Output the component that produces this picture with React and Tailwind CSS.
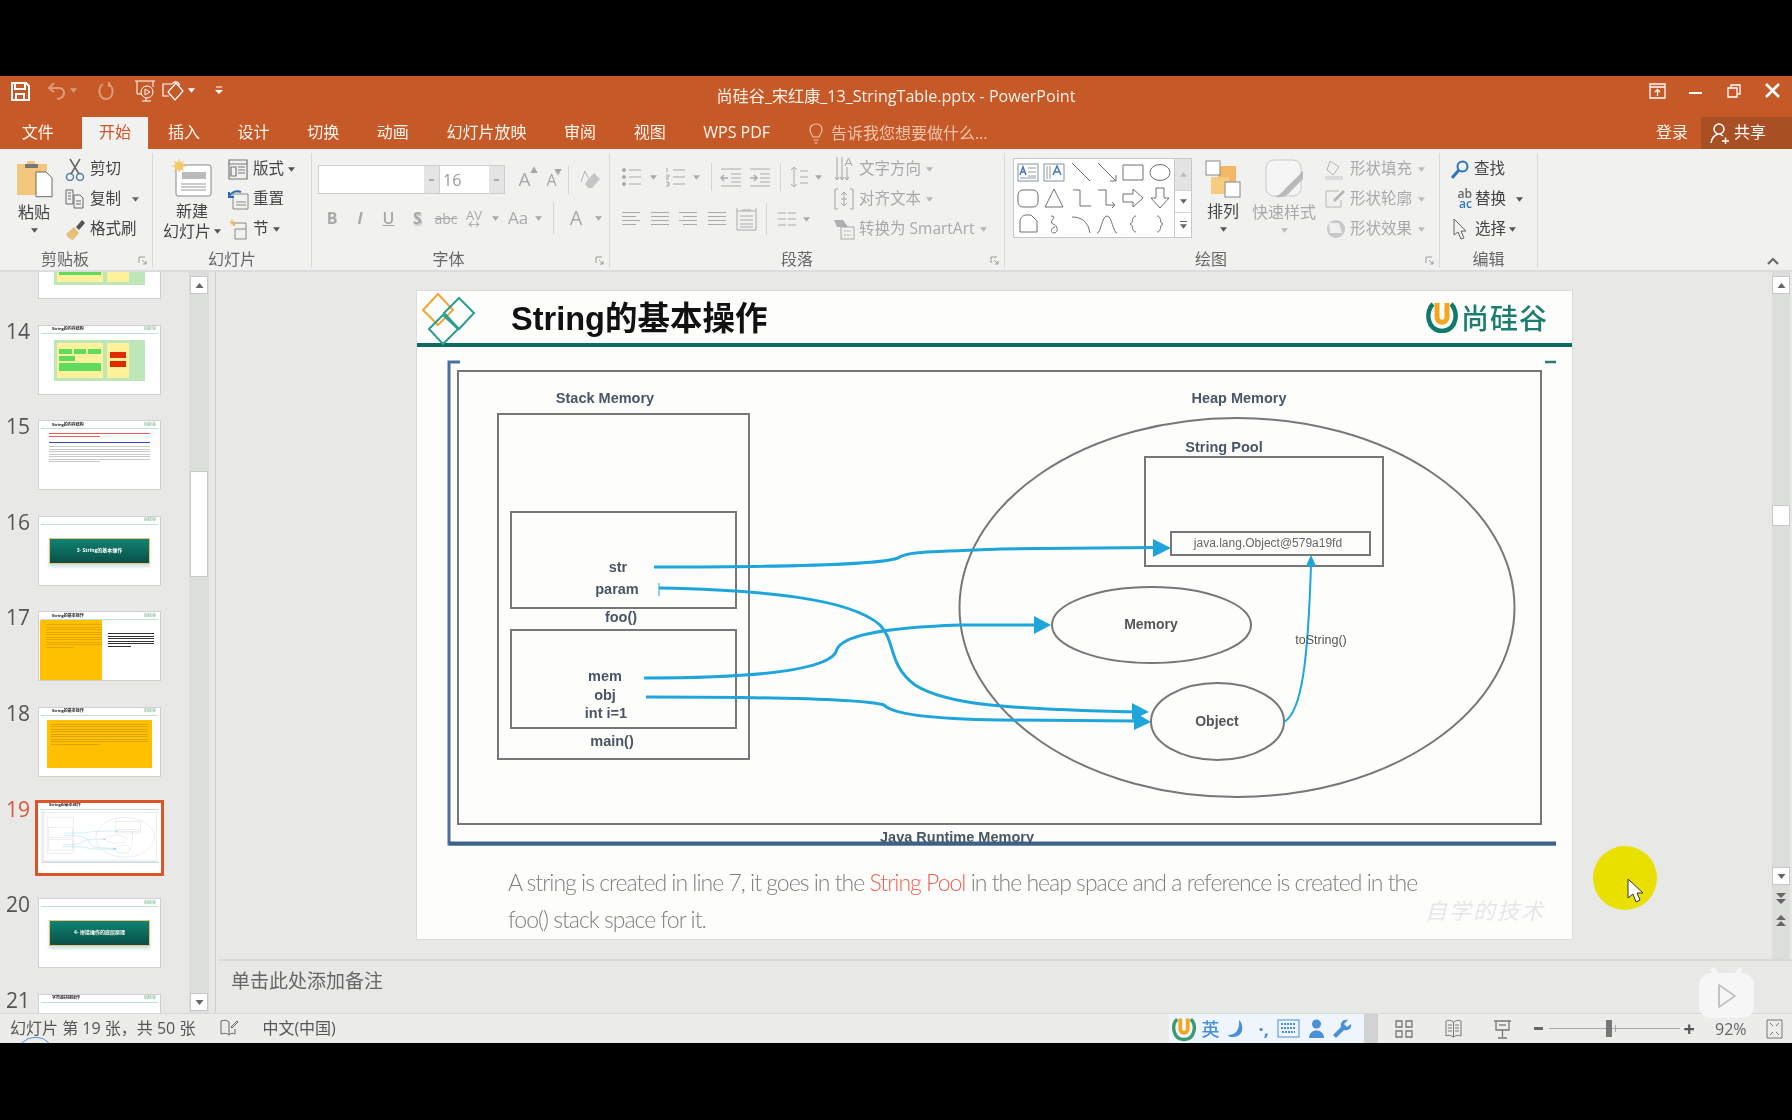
import React from "react";

const C = ({ className = "" }) => (
  <svg viewBox="0 0 8 5" className={`w-[7px] h-[5px] shrink-0 ${className}`}><path d="M0 0H8L4 5Z" fill="currentColor" /></svg>
);
const Ic = ({ w, h, vb, className = "", children, sw = 1 }) => (
  <svg width={w} height={h} viewBox={vb || `0 0 ${w} ${h}`} fill="none" stroke="currentColor" strokeWidth={sw} className={`shrink-0 ${className}`}>{children}</svg>
);

/* ---------- title bar ---------- */
function TitleBar() {
  return (
    <div className="h-[41px] grid grid-cols-[1fr_auto_1fr] text-white">
      <div className="flex items-center h-[29px] pl-[10px]">
        <Ic w={20} h={20} sw={2}><path d="M2 2H16L19 5V19H2Z" /><path d="M5 2V8H15V2M6 19V13H14V19" /></Ic>
        <Ic w={19} h={18} className="ml-[18px] text-[#df9a78]" sw={2}><path d="M6 1L1 6L6 10M2 6H11C18 6 18 16 9 17" /></Ic>
        <C className="ml-[3px] text-[#df9a78] w-[6px]" />
        <Ic w={18} h={20} className="ml-[20px] text-[#df9a78]" sw={2}><path d="M6 3C0 7 2 18 9 18C16 18 18 8 12 3M12 1V6" /></Ic>
        <Ic w={22} h={24} className="ml-[19px]"><path d="M1 2H21M3 2V15H8M19 2V8" /><circle cx="13" cy="13" r="6" /><path d="M11 10L16 13L11 16Z" /><path d="M8 22H17M12 19V22" /></Ic>
        <Ic w={23} h={22} className="ml-[6px]" sw={1.2}><path d="M10 4H1V16H7" /><path d="M14 3L21 11L13 20L6 12Z" /><path d="M10 4C13 0 18 2 17 6" /></Ic>
        <C className="ml-[3px] text-white" />
        <Ic w={8} h={9} className="ml-[20px]"><path d="M1 1H7" /><path d="M0 4H8L4 8Z" fill="currentColor" stroke="none" /></Ic>
      </div>
      <div className="text-[16.100px] leading-[41px] text-[#fbf1ea]">尚硅谷_宋红康_13_StringTable.pptx - PowerPoint</div>
      <div className="flex items-center justify-end h-[29px] pr-[12px]">
        <Ic w={17} h={16} sw={1.3}><path d="M1 1H16V15H1ZM1 4H16" /><path d="M8.500 13V7M6 9L8.500 6.500L11 9" /></Ic>
        <div className="w-[13px] h-[2.500px] bg-white ml-[23px] mt-[5px]" />
        <Ic w={14} h={14} className="ml-[25px]" sw={1.3}><path d="M1 4H10V13H1ZM4 4V1H13V10H10" /></Ic>
        <Ic w={15} h={15} className="ml-[24px]" sw={2.600}><path d="M1 1L14 14M14 1L1 14" /></Ic>
      </div>
    </div>
  );
}

function Tabs() {
  const t = "px-[18.800px] leading-[31px] text-[#fff5ee] whitespace-nowrap";
  return (
    <div className="h-[32px] flex text-[16px] items-stretch">
      <div className="w-[3px]" />
      <div className={t}>文件</div>
      <div className="w-[9.400px]" />
      <div className="px-[17px] leading-[31px] bg-[#f1f1f0] text-[#c9562a]">开始</div>
      <div className="w-[1.200px]" />
      <div className={t}>插入</div>
      <div className={t}>设计</div>
      <div className={t}>切换</div>
      <div className={t}>动画</div>
      <div className={t}>幻灯片放映</div>
      <div className={t}>审阅</div>
      <div className={t}>视图</div>
      <div className={t}>WPS PDF</div>
      <div className="flex items-center text-[#f0c4ac] ml-[20px]">
        <Ic w={14} h={21} sw={1.200}><path d="M4 14C3 11 1 10 1 7C1 3 3.500 1 7 1C10.500 1 13 3 13 7C13 10 11 11 10 14ZM4.500 17H9.500M5.500 20H8.500" /></Ic>
        <span className="ml-[8px] whitespace-nowrap">告诉我您想要做什么...</span>
      </div>
      <div className="ml-auto flex">
        <div className="leading-[31px] mr-[13px] text-[#fff5ee]">登录</div>
        <div className="w-[91px] bg-[#a94f24] flex items-center pl-[9px] text-white">
          <Ic w={19} h={22} sw={1.500}><circle cx="9" cy="7" r="5" /><path d="M1 21C2 15 5 13 8 12M10 12L13 14M12 19H19M15.500 15.500V22" /></Ic>
          <span className="ml-[5px] -mt-[2px]">共享</span>
        </div>
      </div>
    </div>
  );
}

/* ---------- ribbon ---------- */
const Launcher = () => (
  <Ic w={9} h={9} className="absolute right-[5px] bottom-[3px] text-[#9a9a9a]"><path d="M1 7V1H7M4 4L8 8M8 5V8H5" /></Ic>
);
const Group = ({ className, label, launcher, children }) => (
  <div className={`relative shrink-0 h-[115px] border-r border-[#d9d9d9] flex flex-col ${className}`}>
    <div className="h-[97px] pt-[1px] flex">{children}</div>
    <div className="text-center text-[16px] leading-[18px] text-[#666]">{label}</div>
    {launcher && <Launcher />}
  </div>
);
const Row = ({ icon, text, caret, className = "", tc = "text-[#444]" }) => (
  <div className={`h-[30px] flex items-center ${className}`}>
    {icon}
    <span className={`text-[15.500px] whitespace-nowrap ${tc}`}>{text}</span>
    {caret}
  </div>
);

function Clipboard() {
  return (
    <Group className="w-[153px]" label={<span className="pr-[22px]">剪贴板</span>} launcher>
      <div className="w-[38px] ml-[15px] flex flex-col items-center shrink-0">
        <svg width="37" height="40" viewBox="0 0 37 40" className="mt-[5px]">
          <path d="M1 5H11V2H19V5H31V36H1Z" fill="#f2c77b" />
          <path d="M9 5H22V9H9Z" fill="#777" />
          <path d="M20 20H30L36 26V46H20Z" transform="translate(0,-6) scale(1,0.95)" fill="#fff" stroke="#666" />
        </svg>
        <div className="text-[16px] leading-[18px] text-[#444] mt-[4px] whitespace-nowrap">粘贴</div>
        <C className="text-[#555] mt-[7px]" />
      </div>
      <div className="ml-[12px] flex flex-col">
        <Row icon={<Ic w={21} h={23} className="mr-[4px] text-[#5c7fa3]" sw={1.500}><circle cx="5" cy="19" r="3.500" /><circle cx="15" cy="19" r="3.500" /><path d="M6 16L15 1M14 16L5 1" stroke="#666" /></Ic>} text="剪切" />
        <Row icon={<Ic w={20} h={20} className="mr-[5px] text-[#666]"><path d="M1 1H8V15H1ZM3 4H6M3 7H6M3 10H6M9 6H15L18 9V19H9ZM11 12H16M11 15H16" /></Ic>} text="复制" caret={<C className="ml-[11px] text-[#666]" />} />
        <Row icon={<svg width="21" height="21" viewBox="0 0 21 21" className="mr-[4px]"><path d="M1 15L9 8L14 14L8 21C5 20 3 19 1 15Z" fill="#e7bf76" /><path d="M11 8L17 1L20 4L14 11Z" fill="#555" /></svg>} text="格式刷" />
      </div>
    </Group>
  );
}

function Slides() {
  return (
    <Group className="w-[159px]" label="幻灯片">
      <div className="w-[62px] ml-[8px] flex flex-col items-center shrink-0">
        <svg width="40" height="38" viewBox="0 0 40 38" className="mt-[5px]">
          <rect x="4" y="6" width="35" height="31" rx="2" fill="#fff" stroke="#888" />
          <rect x="10" y="13" width="24" height="7" fill="#bbb" />
          <path d="M9 25H34M9 28H34M9 31H34" stroke="#999" />
          <circle cx="7" cy="7" r="4.500" fill="#f5c766" />
          <path d="M7 0V14M0 7H14M2 2L12 12M12 2L2 12" stroke="#f5c766" />
        </svg>
        <div className="text-[16px] leading-[18px] text-[#444] mt-[5px]">新建</div>
        <div className="flex items-center text-[16px] leading-[20px] text-[#444] whitespace-nowrap mt-[1px]">幻灯片<C className="ml-[3px] text-[#555]" /></div>
      </div>
      <div className="ml-[5px] flex flex-col">
        <Row icon={<Ic w={20} h={21} className="mr-[5px] text-[#777]" sw={1.200}><path d="M1 1H19V20H1ZM1 5H19M3 8H8V17H3ZM10 8H17M10 11H17M10 14H17" /></Ic>} text="版式" caret={<C className="ml-[4px] text-[#555]" />} />
        <Row icon={<svg width="21" height="21" viewBox="0 0 21 21" className="mr-[4px]" fill="none"><path d="M5 5H20V20H5Z" stroke="#888" /><path d="M8 13H18M8 16H18" stroke="#888" /><path d="M1 8C3 3 8 1 13 3M1 3V8H6" stroke="#2b6cb0" strokeWidth="2" /></svg>} text="重置" />
        <Row icon={<svg width="20" height="22" viewBox="0 0 20 22" className="mr-[5px]" fill="none"><path d="M3 5H18V21H7V11H18" stroke="#888" /><path d="M6 4V8" stroke="#f2b866" strokeWidth="2" /><path d="M1 4H7M4 1V7" stroke="#f2b866" /></svg>} text="节" caret={<C className="ml-[4px] text-[#555]" />} />
      </div>
    </Group>
  );
}

const F = ({ className = "", children }) => (
  <div className={`flex items-center justify-center shrink-0 text-[#a8a8a8] ${className}`}>{children}</div>
);

function Font() {
  return (
    <Group className="w-[298px]" label={<span className="pr-[24px]">字体</span>} launcher>
      <div className="flex flex-col pl-[6px] pt-[11px]">
        <div className="flex items-center h-[29px]">
          <div className="w-[122px] h-[29px] border border-[#cfcfcf] bg-white flex justify-end">
            <div className="w-[15px] h-full bg-[#e4e4e4] flex items-center justify-center"><div className="w-[5px] h-[2px] bg-[#aaa]" /></div>
          </div>
          <div className="w-[65px] h-[29px] border border-l-0 border-[#cfcfcf] bg-white flex items-center justify-between text-[16px] text-[#9b9b9b]">
            <span className="pl-[3px]">16</span>
            <div className="w-[15px] h-full bg-[#e4e4e4] flex items-center justify-center"><div className="w-[5px] h-[2px] bg-[#aaa]" /></div>
          </div>
          <F className="w-[21px] ml-[9px] text-[19px] relative">A<span className="absolute -top-[1px] -right-[3px] text-[8px]">▲</span></F>
          <F className="w-[19px] ml-[7px] text-[16px] relative">A<span className="absolute -top-[2px] -right-[1px] text-[8px]">▼</span></F>
          <div className="w-px h-[28px] bg-[#d5d5d5] ml-[7px]" />
          <F className="w-[20px] ml-[11px]"><svg width="20" height="19" viewBox="0 0 20 19"><path d="M9 8L14 3L20 9L12 18H8L5 14Z" fill="#c5c5c5" /><path d="M1 12L5 1L8 8" stroke="#b5b5b5" fill="none" /></svg></F>
        </div>
        <div className="flex items-center h-[30px] mt-[9px] text-[16px]">
          <F className="w-[28px] font-bold">B</F>
          <F className="w-[28px] italic font-bold">I</F>
          <F className="w-[29px] underline font-semibold">U</F>
          <F className="w-[29px] font-bold [text-shadow:1px_2px_1px_#ccc]">S</F>
          <F className="w-[28px] text-[14px] line-through">abc</F>
          <F className="w-[28px] flex-col text-[13px] leading-[12px]">AV<span className="text-[12px] leading-[7px]">↔</span></F>
          <F className="w-[14px]"><C /></F>
          <F className="w-[30px] ml-[1px] text-[17px]">Aa</F>
          <F className="w-[10px]"><C /></F>
          <div className="w-px h-[32px] bg-[#d5d5d5] ml-[10px]" />
          <F className="w-[20px] ml-[12px] text-[20px]">A</F>
          <F className="w-[10px] ml-[7px]"><C /></F>
        </div>
      </div>
    </Group>
  );
}

const Lines = ({ w = 18, n = 4, step = 4, short }) => (
  <Ic w={w} h={n * step} className="text-[#ababab]">
    {Array.from({ length: n }).map((_, i) => <path key={i} d={`M${short === "r" && i % 2 ? 4 : 0} ${i * step + 1.500}H${short === "l" && i % 2 ? w - 4 : w}`} />)}
  </Ic>
);

function Paragraph() {
  const bullets = (
    <Ic w={19} h={20} className="text-[#ababab]">
      <circle cx="2" cy="3" r="1.500" fill="currentColor" /><circle cx="2" cy="10" r="1.500" fill="currentColor" /><circle cx="2" cy="17" r="1.500" fill="currentColor" />
      <path d="M7 3H19M7 10H19M7 17H19" />
    </Ic>
  );
  const numbered = (
    <Ic w={19} h={20} className="text-[#ababab]">
      <path d="M7 3H19M7 10H19M7 17H19M1 1V5M0 8H3V10H0V12H3M0 15H3V19H0M1 17H3" />
    </Ic>
  );
  const indent = (flip) => (
    <Ic w={22} h={20} className="text-[#ababab]">
      <path d="M1 2H21M11 7H21M11 11H21M11 15H21M1 19H21" />
      <path d={flip ? "M1 11H8M5 8L8 11L5 14" : "M8 11H1M4 8L1 11L4 14"} strokeWidth="1.500" />
    </Ic>
  );
  return (
    <Group className="w-[395px]" label={<span className="pr-[20px]">段落</span>} launcher>
      <div className="flex flex-col pl-[12px] pt-[8px] shrink-0 w-[224px]">
        <div className="h-[30px] flex items-center">
          {bullets}<C className="ml-[9px] text-[#ababab]" />
          <div className="ml-[9px]">{numbered}</div><C className="ml-[8px] text-[#ababab]" />
          <div className="w-px h-[28px] bg-[#d5d5d5] ml-[11px]" />
          <div className="ml-[8px]">{indent(false)}</div>
          <div className="ml-[7px]">{indent(true)}</div>
          <div className="w-px h-[28px] bg-[#d5d5d5] ml-[9px]" />
          <Ic w={17} h={22} className="text-[#ababab] ml-[10px]"><path d="M3 1V21M0 4L3 1L6 4M0 18L3 21L6 18M9 5H17M9 11H17M9 17H17" /></Ic>
          <C className="ml-[7px] text-[#ababab]" />
        </div>
        <div className="h-[30px] mt-[12px] flex items-center">
          <Lines short="l" />
          <div className="ml-[11px]"><Lines /></div>
          <div className="ml-[10px]"><Lines short="r" /></div>
          <div className="ml-[11px]"><Lines /></div>
          <Ic w={21} h={24} className="text-[#ababab] ml-[10px]"><path d="M1 1V23H20V1M1 4H20M6 3H15M4 9H17M4 13H17M4 17H17M4 20H17" /></Ic>
          <div className="w-px h-[32px] bg-[#d5d5d5] ml-[9px]" />
          <Ic w={18} h={16} className="text-[#ababab] ml-[11px]"><path d="M0 2H8M10 2H18M0 8H8M10 8H18M0 14H8M10 14H18" /></Ic>
          <C className="ml-[7px] text-[#ababab]" />
        </div>
      </div>
      <div className="flex flex-col">
        <Row tc="text-[#a9a9a9]" text="文字方向" caret={<C className="ml-[5px] text-[#b5b5b5]" />} icon={<Ic w={20} h={24} className="mr-[5px] text-[#a5a5a5]"><path d="M3 0V23M8 0V23M13 10V23M1 20L3 23L5 20M6 20L8 23L10 20M11 20L13 23L15 20" /><path d="M11 9L14.500 1L18 9M12 6.500H17" /></Ic>} />
        <Row tc="text-[#a9a9a9]" text="对齐文本" caret={<C className="ml-[5px] text-[#b5b5b5]" />} icon={<Ic w={20} h={22} className="mr-[5px] text-[#a5a5a5]"><path d="M4 1H1V21H4M16 1H19V21H16M10 4V18M7 7L10 4L13 7M7 15L10 18L13 15M7 11H13" /></Ic>} />
        <Row tc="text-[#a9a9a9]" text="转换为 SmartArt" caret={<C className="ml-[5px] text-[#b5b5b5]" />} icon={<svg width="21" height="21" viewBox="0 0 21 21" className="mr-[4px] shrink-0" fill="none"><path d="M0 1H9L14 8H3Z" fill="#b0b0b0" /><rect x="7" y="8" width="13" height="12" stroke="#aaa" /><path d="M10 12H17M10 16H17" stroke="#aaa" strokeDasharray="2 1" /></svg>} />
      </div>
    </Group>
  );
}

const Shape = ({ d, children }) => (
  <div className="flex items-center justify-center">
    <Ic w={22} h={22} className="text-[#6f6f6f]">{d ? <path d={d} /> : children}</Ic>
  </div>
);

function Drawing() {
  return (
    <Group className="w-[435px]" label={<span className="pr-[22px]">绘图</span>} launcher>
      <div className="ml-[8px] mt-[4px] w-[179px] h-[80px] border border-[#c8c8c8] flex shrink-0">
        <div className="w-[160px] bg-white grid grid-cols-6 grid-rows-3 px-[1px]">
          <Shape><rect x="1" y="3" width="20" height="17" stroke="#7f8fa5" /><path d="M3 14L6 6L9 14M4 11H8" stroke="#4a78b5" strokeWidth="1.500" /><path d="M11 7H19M11 11H19M11 15H19M3 17H19" stroke="#999" /></Shape>
          <Shape><rect x="1" y="3" width="20" height="17" stroke="#7f8fa5" /><path d="M4 5V18M7 5V18" stroke="#999" /><path d="M10 14L14 5L18 14M11 11H17" stroke="#4a78b5" strokeWidth="1.500" /></Shape>
          <Shape d="M2 2L20 20" />
          <Shape d="M2 2L20 20M14 20H20V14" />
          <Shape d="M1 4H21V19H1Z" />
          <Shape><ellipse cx="11" cy="11.500" rx="10" ry="8" /></Shape>
          <Shape><rect x="1" y="3" width="20" height="17" rx="5" /></Shape>
          <Shape d="M11 2L20 20H2Z" />
          <Shape d="M3 3H10V19H21" />
          <Shape d="M2 3H10V18H19M16 15L19 18L16 21" />
          <Shape d="M1 7H11V2L21 11L11 20V15H1Z" />
          <Shape d="M7 1H15V11H20L11 21L2 11H7Z" />
          <Shape d="M9 2H14L20 8V19H3V8C3 5 6 2 9 2Z" />
          <Shape d="M8 3C16 3 4 9 10 11C16 13 15 20 11 20C7 20 8 14 12 14" />
          <Shape d="M2 4C11 4 18 8 20 20" />
          <Shape d="M1 20C5 20 6 3 11 3C16 3 17 20 21 20" />
          <Shape d="M14 3C9 3 12 10 8 11C12 12 9 19 14 19" />
          <Shape d="M8 3C13 3 10 10 14 11C10 12 13 19 8 19" />
        </div>
        <div className="flex-1 flex flex-col border-l border-[#c8c8c8] text-[#666]">
          <div className="h-[32px] bg-[#e3e3e3] flex items-center justify-center border-b border-[#d0d0d0]"><C className="rotate-180 text-[#bbb]" /></div>
          <div className="flex-1 bg-white flex items-center justify-center border-b border-[#d0d0d0]"><C /></div>
          <div className="h-[24px] bg-white flex flex-col gap-[2px] items-center justify-center"><div className="w-[7px] h-px bg-[#666]" /><C /></div>
        </div>
      </div>
      <div className="w-[44px] ml-[9px] flex flex-col items-center shrink-0">
        <svg width="37" height="38" viewBox="0 0 37 38" className="mt-[6px]">
          <rect x="13" y="6" width="18" height="18" fill="#f2b866" />
          <rect x="6" y="17" width="18" height="17" fill="#f6cd7f" />
          <rect x="1" y="1" width="14" height="14" fill="#fff" stroke="#888" />
          <rect x="20" y="22" width="15" height="15" fill="#fff" stroke="#888" />
        </svg>
        <div className="text-[16px] leading-[18px] text-[#444] mt-[4px] whitespace-nowrap">排列</div>
        <C className="text-[#555] mt-[7px]" />
      </div>
      <div className="w-[64px] ml-[7px] flex flex-col items-center shrink-0">
        <svg width="39" height="40" viewBox="0 0 39 40" className="mt-[5px]" fill="none">
          <rect x="1" y="1" width="35" height="36" rx="8" fill="#f5f5f5" stroke="#c9c9c9" />
          <path d="M38 12L20 30C16 35 12 37 10 38C14 39 22 38 26 32L38 20Z" fill="#b9b9b9" />
        </svg>
        <div className="text-[16px] leading-[18px] text-[#a9a9a9] mt-[4px] whitespace-nowrap">快速样式</div>
        <C className="text-[#bbb] mt-[7px]" />
      </div>
      <div className="ml-[9px] flex flex-col">
        <Row tc="text-[#a9a9a9]" text="形状填充" caret={<C className="ml-[6px] text-[#bbb]" />} icon={<svg width="21" height="21" viewBox="0 0 21 21" className="mr-[4px] shrink-0" fill="none"><path d="M5 2L14 8L8 16L2 11Z" stroke="#b5b5b5" /><path d="M0 17H18V21H0Z" fill="#dcdcdc" /></svg>} />
        <Row tc="text-[#a9a9a9]" text="形状轮廓" caret={<C className="ml-[6px] text-[#bbb]" />} icon={<svg width="21" height="19" viewBox="0 0 21 19" className="mr-[4px] shrink-0" fill="none"><path d="M14 1H1V17H16V10" stroke="#b5b5b5" /><path d="M9 11L19 1" stroke="#b5b5b5" strokeWidth="2.500" /></svg>} />
        <Row tc="text-[#a9a9a9]" text="形状效果" caret={<C className="ml-[6px] text-[#bbb]" />} icon={<svg width="21" height="19" viewBox="0 0 21 19" className="mr-[4px] shrink-0"><circle cx="11" cy="9" r="9" fill="#c8c8c8" /><path d="M4 3H14L17 13H5Z" fill="#efefef" /></svg>} />
      </div>
    </Group>
  );
}

function Editing() {
  return (
    <Group className="w-[98px]" label="编辑">
      <div className="pl-[11px] flex flex-col">
        <Row text="查找" icon={<Ic w={18} h={19} className="mr-[5px] text-[#2a76b8]" sw={2}><circle cx="11.500" cy="6.500" r="5" /><path d="M8 10L1 18" strokeWidth="3" /></Ic>} />
        <Row text="替换" caret={<C className="ml-[10px] text-[#555]" />} icon={<span className="w-[21px] mr-[3px] flex flex-col text-[12px] leading-[10px] font-semibold text-[#2a76b8] items-end"><span className="text-[#666]">ab</span><span>ac</span></span>} />
        <Row text="选择" caret={<C className="ml-[3px] text-[#555]" />} icon={<Ic w={15} h={22} className="ml-[2px] mr-[7px] text-[#666]"><path d="M1 1V17L5 14L8 21L11 20L8 13H13Z" /></Ic>} />
      </div>
    </Group>
  );
}

function Ribbon() {
  return (
    <div className="relative h-[123px] bg-[#f1f1f0] border-b-2 border-[#dcdcdc] pt-[4px] flex">
      <Clipboard /><Slides /><Font /><Paragraph /><Drawing /><Editing />
      <Ic w={12} h={8} sw={2} className="absolute right-[13px] top-[108px] text-[#666]"><path d="M1 7L6 2L11 7" /></Ic>
    </div>
  );
}

/* ---------- slide diagram ---------- */
const BLUE = "#1ea5dc";
function DiagramShapes({ text = true }) {
  const g = "#777";
  const lb = "text-[14.500px] font-bold fill-[#4a5666] font-['Liberation_Sans',sans-serif]";
  const T = ({ x, y, c = lb, children }) => text ? <text x={x} y={y - 1} textAnchor="middle" dominantBaseline="central" className={c}>{children}</text> : null;
  return (
    <>
      <path d="M460 362H449V844H1556" fill="none" stroke="#4a719e" strokeWidth="3" />
      <path d="M449 843.500H1556" stroke="#3d6288" strokeWidth="4" />
      <path d="M1545 362H1556" stroke="#2f7d70" strokeWidth="2.500" />
      <g fill="none" stroke={g} strokeWidth="2">
        <rect x="458" y="371" width="1083" height="453" />
        <rect x="498" y="414" width="251" height="345" />
        <rect x="511" y="512" width="225" height="96" />
        <rect x="511" y="630" width="225" height="98" />
        <ellipse cx="1237" cy="607.500" rx="277.500" ry="189.500" />
        <rect x="1145" y="457" width="238" height="109" />
        <rect x="1171" y="532" width="199" height="23" fill="#fdfdfc" />
        <ellipse cx="1151.500" cy="625" rx="99.500" ry="38" />
        <ellipse cx="1217.500" cy="721.500" rx="66.500" ry="38.500" />
      </g>
      <g fill="none" stroke={BLUE} strokeWidth="3">
        <path d="M654 567C760 567 880 565 898 558C905 552 920 552 1000 549L1155 547.500" />
        <path d="M659 588C760 590 850 598 880 625C896 642 888 665 915 685C945 704 1000 709 1136 712" />
        <path d="M644 678C740 678 825 672 836 652C838 638 870 628 961 625L1036 625" />
        <path d="M646 697C740 697 860 698 884 705C892 714 930 719 1000 720L1136 721" />
        <path d="M1284 722C1302 712 1308 660 1311 565" strokeWidth="2" />
      </g>
      <path d="M659 583V596" stroke={BLUE} strokeWidth="1" />
      <g fill={BLUE}>
        <path d="M1153 539L1171 548L1153 557Z" />
        <path d="M1034 616L1051 625L1034 634Z" />
        <path d="M1132 703L1149 712L1132 720Z" />
        <path d="M1134 712L1151 722L1134 730Z" />
        <path d="M1306 566L1311 555L1316 566Z" />
      </g>
      <T x={605} y={399}>Stack Memory</T>
      <T x={1239} y={399}>Heap Memory</T>
      <T x={1224} y={448}>String Pool</T>
      <T x={618} y={568}>str</T>
      <T x={617} y={590}>param</T>
      <T x={621} y={618}>foo()</T>
      <T x={605} y={677}>mem</T>
      <T x={605} y={696}>obj</T>
      <T x={606} y={714}>int i=1</T>
      <T x={612} y={742}>main()</T>
      <T x={1268} y={544} c="text-[12px] fill-[#666] font-['Liberation_Sans',sans-serif]">java.lang.Object@579a19fd</T>
      <T x={1151} y={625} c="text-[14px] font-bold fill-[#555] font-['Liberation_Sans',sans-serif]">Memory</T>
      <T x={1217} y={722} c="text-[14px] font-bold fill-[#555] font-['Liberation_Sans',sans-serif]">Object</T>
      <T x={1321} y={641} c="text-[12.500px] fill-[#555] font-['Liberation_Sans',sans-serif]">toString()</T>
      <T x={957} y={838}>Java Runtime Memory</T>
    </>
  );
}

function SlideCanvas() {
  return (
    <div className="relative w-[1157px] h-[650px] bg-[#fdfdfc] border border-[#dcdcdc] shrink-0 flex flex-col">
      <div className="h-[52px] flex items-center border-b-4 border-[#0f6b5d] box-content">
        <svg width="56" height="54" viewBox="0 0 56 54" className="ml-[5px] mt-[3px] shrink-0" fill="none" strokeWidth="2">
          <path d="M16 2L31 18L16 33L1 18Z" stroke="#f0a73a" />
          <path d="M37 6L52 21L37 37L22 21Z" stroke="#2a9d8f" />
          <path d="M21 23L36 37L21 52L7 37Z" stroke="#2a9d8f" />
        </svg>
        <div className="ml-[33px] mt-[4px] text-[32.500px] leading-[44px] font-bold text-[#111] font-['Liberation_Sans','Noto_Sans_CJK_SC',sans-serif] whitespace-nowrap">String的基本操作</div>
        <div className="ml-auto mr-[24px] flex items-center">
          <svg width="32" height="32" viewBox="0 0 32 32" className="shrink-0" fill="none">
            <path d="M7 3C-1 10 1 30 16 30C31 30 33 10 25 3" stroke="#0f7a68" strokeWidth="4.500" />
            <path d="M11 2V16C11 23 21 23 21 16V2" stroke="#f3a51e" strokeWidth="5" />
          </svg>
          <span className="ml-[3px] text-[28px] leading-[32px] font-medium text-[#1a7d6e] font-['Noto_Sans_CJK_SC',sans-serif] tracking-[1px]">尚硅谷</span>
        </div>
      </div>
      <svg viewBox="417 347 1155 503" className="w-[1155px] h-[503px] shrink-0">
        <DiagramShapes />
      </svg>
      <div className="pl-[91px] pt-[14px] text-[23px] leading-[37px] font-light text-[#808080] font-['Lato',sans-serif] tracking-[-1px]">
        <div className="whitespace-nowrap">A string is created in line 7, it goes in the <span className="text-[#f06050]">String Pool</span> in the heap space and a reference is created in the</div>
        <div>foo() stack space for it.</div>
      </div>
      <div className="absolute left-[1008px] top-[603px] italic text-[22px] tracking-[2px] text-[#e6e6e6] whitespace-nowrap">自学的技术</div>
    </div>
  );
}

/* ---------- thumbnails ---------- */
const TH = ({ title, h = "h-[70px]", children }) => (
  <div className={`w-[123px] ${h} bg-white border border-[#d0d0d0] flex flex-col overflow-hidden shrink-0`}>
    <div className="h-[8px] mx-[2px] border-b border-[#bfe0da] flex items-center justify-between pl-[11px] pr-[2px] shrink-0">
      <span className="text-[4px] font-bold leading-[4px] text-[#222] whitespace-nowrap">{title}</span>
      <span className="text-[4px] leading-[4px] text-[#5aa56f]">尚硅谷</span>
    </div>
    {children}
  </div>
);
const Num = ({ n, active }) => (
  <div className={`w-[38px] pl-[6px] text-[21px] leading-[24px] -mt-[6px] h-[24px] font-['Open_Sans',sans-serif] ${active ? "text-[#d8573c]" : "text-[#555]"}`}>{n}</div>
);
const Banner = ({ t }) => (
  <div className="mx-[10px] mt-[13px] h-[26px] bg-gradient-to-b from-[#0f8473] to-[#0a4f47] border border-[#f2c27a] shadow-[0_3px_3px_#cfe3de] flex items-center justify-center text-[5px] font-bold text-white whitespace-nowrap">{t}</div>
);
const TxtLines = ({ n, c = "bg-[#c9c9c9]", cls = "" }) => (
  <div className={`flex flex-col gap-[1.500px] ${cls}`}>
    {Array.from({ length: n }).map((_, i) => <div key={i} className={`h-[1px] ${c} ${i === n - 1 ? "w-1/2" : "w-full"}`} />)}
  </div>
);
const Mem = () => (
  <div className="mx-[15px] mt-[6px] h-[41px] bg-[#bfe6b8] p-[3px] flex gap-[4px]">
    <div className="w-[46px] bg-[#fdf29a] p-[2px] flex flex-col gap-[2px] pt-[6px]">
      <div className="flex gap-[2px]"><div className="flex-1 h-[5px] bg-[#5fdc5f]" /><div className="flex-1 h-[5px] bg-[#5fdc5f]" /><div className="flex-1 h-[5px] bg-[#5fdc5f]" /></div>
      <div className="w-[16px] h-[5px] bg-[#5fdc5f]" />
      <div className="h-[8px] bg-[#5fdc5f]" />
    </div>
    <div className="w-[22px] bg-[#fdf29a] pt-[9px] px-[3px] flex flex-col gap-[3px]"><div className="h-[6px] bg-[#e02b00]" /><div className="h-[6px] bg-[#e02b00]" /></div>
  </div>
);
function Thumbs() {
  const row = "flex h-[95.600px] shrink-0";
  return (
    <div className="w-[189px] h-full overflow-hidden shrink-0">
      <div className="-mt-[43px] flex flex-col">
        <div className={row}><Num n="" /><TH title="String的内存结构"><Mem /></TH></div>
        <div className={row}><Num n="14" /><TH title="String的内存结构"><Mem /></TH></div>
        <div className={row}><Num n="15" /><TH title="String的内存结构">
          <TxtLines n={2} c="bg-[#f15a5a]" cls="mx-[10px] mt-[4px]" />
          <div className="h-[1.500px] bg-[#3344cc] mx-[10px] mt-[5px]" />
          <TxtLines n={7} cls="mx-[10px] mt-[3px]" />
        </TH></div>
        <div className={row}><Num n="16" /><TH title=""><Banner t="3- String的基本操作" /></TH></div>
        <div className={row}><Num n="17" /><TH title="String的基本操作">
          <div className="flex flex-1">
            <div className="w-[62px] ml-[1px] bg-[#ffc000] pl-[6px] pt-[4px]"><TxtLines n={10} c="bg-[#e2a800]" /></div>
            <div className="flex-1 px-[6px] pt-[13px]"><TxtLines n={6} c="bg-[#333]" /></div>
          </div>
        </TH></div>
        <div className={row}><Num n="18" /><TH title="String的基本操作">
          <div className="mx-[8px] mt-[4px] h-[48px] bg-[#ffc000] px-[4px] pt-[4px]"><TxtLines n={9} c="bg-[#dba500]" /></div>
        </TH></div>
        <div className={row}>
          <Num n="19" active />
          <div className="-ml-[3px] -mt-[3px] h-[76px] w-[129px] border-[3px] border-[#dd5426] bg-white flex flex-col shrink-0 overflow-hidden">
            <div className="h-[7px] mx-[2px] border-b border-[#bfe0da] pl-[9px] text-[4px] leading-[4px] font-bold text-[#222]">String的基本操作</div>
            <svg viewBox="417 347 1155 600" className="w-[123px] h-[63px]"><g opacity="0.6"><DiagramShapes text={false} /></g></svg>
          </div>
        </div>
        <div className={row}><Num n="20" /><TH title=""><Banner t="4- 拼接操作的底层原理" /></TH></div>
        <div className={row}><Num n="21" /><TH title="字符串拼接操作" /></div>
      </div>
    </div>
  );
}

const SB = ({ flip, className = "" }) => (
  <div className={`w-[18px] h-[18px] bg-white border border-[#c8c8c8] flex items-center justify-center shrink-0 ${className}`}>
    <C className={`w-[9px] h-[5px] text-[#666] ${flip ? "rotate-180" : ""}`} />
  </div>
);

function ThumbPane() {
  return (
    <div className="w-[216px] shrink-0 border-r border-[#cfcfcf] flex my-0">
      <Thumbs />
      <div className="w-[20px] bg-[#dcdedc] flex flex-col items-center pt-[4px] shrink-0">
        <SB flip />
        <div className="w-[18px] h-[106px] bg-white border border-[#c8c8c8] mt-[177px] shrink-0" />
        <SB className="mt-[416px]" />
      </div>
    </div>
  );
}

function RightScroll() {
  const dbl = (flip) => (
    <Ic w={10} h={12} className={`text-[#666] ${flip ? "rotate-180" : ""}`}><path d="M5 0L10 5H0ZM5 6L10 11H0Z" fill="currentColor" stroke="none" /></Ic>
  );
  return (
    <div className="w-[18px] mr-[2px] ml-auto h-full bg-[#dcdedc] flex flex-col items-center pt-[4px] shrink-0">
      <SB flip />
      <div className="w-[18px] h-[21px] bg-white border border-[#c8c8c8] mt-[211px] shrink-0" />
      <SB className="mt-[341px]" />
      <div className="mt-[7px]">{dbl(true)}</div>
      <div className="mt-[11px]">{dbl(false)}</div>
    </div>
  );
}

/* ---------- status bar ---------- */
function StatusBar() {
  return (
    <div className="relative h-[30px] bg-[#ececeb] border-t border-[#d8d8d8] flex items-center text-[16px] text-[#555] overflow-hidden">
      <div className="absolute left-[18px] -bottom-[26px] w-[35px] h-[32px] rounded-full border border-[#5b8fd0]" />
      <span className="ml-[10px] -mt-[2px] whitespace-nowrap">幻灯片 第 19 张，共 50 张</span>
      <Ic w={19} h={17} className="ml-[25px] -mt-[2px] text-[#666]"><path d="M9 3C7 1 4 1 1 2V15C4 14 7 14 9 16V3ZM9 16C11 14 13 14 15 15V10M11 8L17 2L18 3L12 9Z" /></Ic>
      <span className="ml-[23px] -mt-[2px] whitespace-nowrap">中文(中国)</span>
      <div className="ml-auto flex items-center h-full">
        <div className="w-[195px] h-full bg-[#eef5fc] flex items-center pl-[3px] text-[#4a8fd8]">
          <svg width="24" height="26" viewBox="0 0 32 32" className="shrink-0" fill="none">
            <path d="M7 3C-1 10 1 30 16 30C31 30 33 10 25 3" stroke="#3b9a6d" strokeWidth="4.500" />
            <path d="M11 2V16C11 23 21 23 21 16V2" stroke="#f3a51e" strokeWidth="5" />
          </svg>
          <span className="ml-[6px] text-[18px] leading-[20px] font-medium">英</span>
          <svg width="17" height="18" viewBox="0 0 17 18" className="ml-[8px]"><path d="M11 0C16 4 17 18 3 17C0 16 0 15 0 15C8 15 12 9 11 0Z" fill="currentColor" /></svg>
          <span className="ml-[14px] text-[18px] font-bold leading-[16px] w-[15px]">·,</span>
          <svg width="23" height="19" viewBox="0 0 23 19" className="ml-[3px]"><rect x="1" y="1" width="21" height="17" fill="none" stroke="currentColor" /><path d="M4 5H19M4 9H19M5 13H18" stroke="currentColor" strokeWidth="2" strokeDasharray="2 1" /></svg>
          <svg width="15" height="20" viewBox="0 0 15 20" className="ml-[9px]"><circle cx="7.500" cy="5" r="4.500" fill="currentColor" /><path d="M0 19C0 9 15 9 15 19Z" fill="currentColor" /></svg>
          <svg width="19" height="20" viewBox="0 0 19 20" className="ml-[9px]"><path d="M18 5L14 8L11 5L15 1C10 0 7 4 8 8L0 16L3 19L11 11C15 12 19 10 18 5Z" fill="currentColor" /></svg>
        </div>
        <div className="w-[14px] h-full bg-[#d2d2d2]" />
        <Ic w={18} h={18} className="ml-[17px] text-[#777]" sw={1.300}><path d="M1 1H7V7H1ZM11 1H17V7H11ZM1 11H7V17H1ZM11 11H17V17H11Z" /></Ic>
        <Ic w={17} h={19} className="ml-[32px] text-[#777]"><path d="M8.500 3C6 1 3 1 1 2V17C3 16 6 16 8.500 18C11 16 14 16 16 17V2C14 1 11 1 8.500 3ZM8.500 3V18M3 6H7M3 9H7M3 12H7M10 6H14M10 9H14M10 12H14" /></Ic>
        <Ic w={17} h={20} className="ml-[32px] text-[#777]" sw={1.300}><path d="M0 2H17M2 2V11H15V2M8.500 11V18M4 19H13" /><path d="M5 6H12" /></Ic>
        <div className="w-[9px] h-[2.500px] bg-[#666] ml-[23px]" />
        <div className="relative w-[131px] h-px bg-[#a8a8a8] ml-[6px]">
          <div className="absolute left-[57px] -top-[8px] w-[6px] h-[17px] bg-[#777]" />
          <div className="absolute left-[66px] -top-[3px] w-px h-[7px] bg-[#aaa]" />
        </div>
        <span className="ml-[4px] text-[#555] text-[20px] font-bold leading-[20px]">+</span>
        <span className="ml-[20px] text-[#666] text-[16px] w-[34px]">92%</span>
        <Ic w={17} h={20} className="ml-[17px] mr-[9px] text-[#777]"><path d="M1 1H16V19H1ZM4 4L7 7M13 4L10 7M4 16L7 13M13 16L10 13" /></Ic>
      </div>
    </div>
  );
}

export default function App() {
  return (
    <div className="relative w-[1792px] h-[1120px] bg-black overflow-hidden flex flex-col blur-[0.4px] font-['Open_Sans','Noto_Sans_CJK_SC',sans-serif]">
      <div className="h-[76px] shrink-0" />
      <div className="h-[967px] shrink-0 flex flex-col bg-[#e8e8e7]">
        <div className="bg-[#c55a28] shrink-0">
          <TitleBar />
          <Tabs />
        </div>
        <Ribbon />
        <div className="flex-1 min-h-0 flex">
          <ThumbPane />
          <div className="flex-1 min-w-0 flex flex-col">
            <div className="h-[687px] flex shrink-0">
              <div className="pl-[200px] pt-[18px]"><SlideCanvas /></div>
              <RightScroll />
            </div>
            <div className="flex-1 border-t-2 border-[#d9d9d8] ml-[2px] pl-[13px] pt-[6px] text-[19px] text-[#666]">单击此处添加备注</div>
          </div>
        </div>
        <StatusBar />
      </div>
      <div className="flex-1" />

      {/* pointer highlight */}
      <div className="absolute left-[1593px] top-[846px] w-[64px] h-[64px] rounded-full bg-[#e9e000]" />
      <svg width="17" height="26" viewBox="0 0 17 26" className="absolute left-[1627px] top-[878px]"><path d="M1 1V20L6 16L9 24L13 22L10 15H16Z" fill="#fff" stroke="#333" /></svg>

      {/* video player badge */}
      <div className="absolute left-[1699px] top-[973px] w-[55px] h-[45px] rounded-[12px] bg-[#f6f6f6] flex items-center justify-center">
        <div className="absolute -top-[6px] left-[13px] w-[5px] h-[10px] bg-[#f6f6f6] rounded-full -rotate-[30deg]" />
        <div className="absolute -top-[6px] right-[13px] w-[5px] h-[10px] bg-[#f6f6f6] rounded-full rotate-[30deg]" />
        <svg width="20" height="26" viewBox="0 0 20 26"><path d="M2 2L18 13L2 24Z" fill="#f6f6f6" stroke="#c4c4c4" strokeWidth="2" strokeLinejoin="round" /></svg>
      </div>
    </div>
  );
}
